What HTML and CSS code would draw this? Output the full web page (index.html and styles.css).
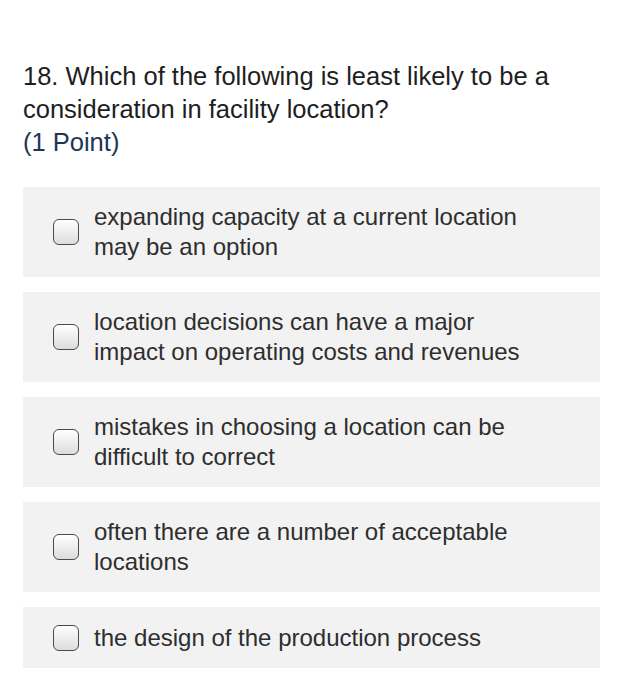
FILE: index.html
```html
<!DOCTYPE html>
<html>
<head>
<meta charset="utf-8">
<link rel="stylesheet" href="styles.css">
</head>
<body>
<div class="question">
  <div class="title">18. Which of the following is least likely to be a consideration in facility location?</div>
  <div class="points">(1 Point)</div>
  <div class="options">
    <label class="option"><span class="box"></span><span class="text">expanding capacity at a current location may be an option</span></label>
    <label class="option"><span class="box"></span><span class="text">location decisions can have a major impact on operating costs and revenues</span></label>
    <label class="option"><span class="box"></span><span class="text">mistakes in choosing a location can be difficult to correct</span></label>
    <label class="option"><span class="box"></span><span class="text">often there are a number of acceptable locations</span></label>
    <label class="option"><span class="box"></span><span class="text">the design of the production process</span></label>
  </div>
</div>
</body>
</html>
```
FILE: styles.css
```css
html, body {
  margin: 0;
  padding: 0;
  background: #ffffff;
}
body {
  font-family: "Liberation Sans", Arial, sans-serif;
}
.question {
  padding: 60px 0 0 23px;
  width: 577px;
}
.title {
  font-size: 25.5px;
  line-height: 33px;
  color: #1e1e1e;
  width: 570px;
}
.points {
  font-size: 25.5px;
  line-height: 33px;
  color: #1d3557;
}
.options {
  margin-top: 28px;
  display: flex;
  flex-direction: column;
  gap: 15px;
}
.option {
  display: flex;
  align-items: center;
  background: #f2f2f2;
  padding: 15px 20px 15px 30px;
  min-height: 31px;
}
.box {
  flex: none;
  width: 24px;
  height: 24px;
  border: 1.5px solid #4a4a4a;
  border-radius: 6px;
  background: linear-gradient(#ffffff, #dcdcdc);
  margin-right: 15px;
}
.text {
  max-width: 440px;
  font-size: 24px;
  line-height: 30px;
  color: #2e2e2e;
}
```
